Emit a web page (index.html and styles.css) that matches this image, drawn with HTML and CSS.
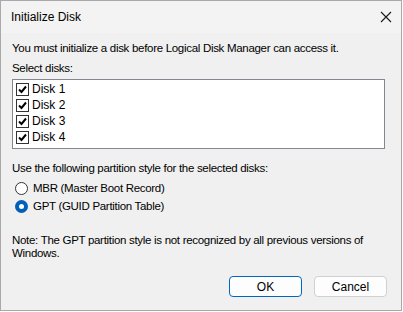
FILE: index.html
```html
<!DOCTYPE html>
<html>
<head>
<meta charset="utf-8">
<link rel="stylesheet" href="styles.css">
</head>
<body>
<div class="window">
  <div class="titlebar">
    <span class="title">Initialize Disk</span>
    <svg class="close" width="12" height="12" viewBox="0 0 12 12"><path d="M1 1 L11 11 M11 1 L1 11" stroke="#1a1a1a" stroke-width="1.1" fill="none"/></svg>
  </div>
  <div class="client">
    <p class="line intro">You must initialize a disk before Logical Disk Manager can access it.</p>
    <p class="line label">Select disks:</p>
    <div class="listbox">
      <div class="item"><span class="check"><svg width="9" height="9" viewBox="0 0 9 9"><path d="M1 4.5 L3.5 7 L8 1.5" stroke="#000" stroke-width="2" fill="none"/></svg></span><span>Disk 1</span></div>
      <div class="item"><span class="check"><svg width="9" height="9" viewBox="0 0 9 9"><path d="M1 4.5 L3.5 7 L8 1.5" stroke="#000" stroke-width="2" fill="none"/></svg></span><span>Disk 2</span></div>
      <div class="item"><span class="check"><svg width="9" height="9" viewBox="0 0 9 9"><path d="M1 4.5 L3.5 7 L8 1.5" stroke="#000" stroke-width="2" fill="none"/></svg></span><span>Disk 3</span></div>
      <div class="item"><span class="check"><svg width="9" height="9" viewBox="0 0 9 9"><path d="M1 4.5 L3.5 7 L8 1.5" stroke="#000" stroke-width="2" fill="none"/></svg></span><span>Disk 4</span></div>
    </div>
    <p class="line style-label">Use the following partition style for the selected disks:</p>
    <div class="radios">
      <div class="radio-row"><span class="radio"></span><span>MBR (Master Boot Record)</span></div>
      <div class="radio-row"><span class="radio on"></span><span>GPT (GUID Partition Table)</span></div>
    </div>
    <p class="note">Note: The GPT partition style is not recognized by all previous versions of Windows.</p>
    <div class="buttons">
      <button class="btn default">OK</button>
      <button class="btn">Cancel</button>
    </div>
  </div>
</div>
</body>
</html>
```

FILE: styles.css
```css
html, body { margin: 0; padding: 0; }
body {
  width: 403px; height: 312px; overflow: hidden;
  background: #ffffff;
  font-family: "Liberation Sans", Arial, sans-serif;
  font-size: 11.5px;
  letter-spacing: -0.3px;
  color: #000;
}
.window {
  width: 400px; height: 309px;
  border: 1px solid #a9a9a9;
  background: #f0f0f0;
  display: flex; flex-direction: column;
}
.titlebar {
  height: 32px;
  background: #f3f3f3;
  display: flex; align-items: center;
  padding: 0 9px 0 10px;
  justify-content: space-between;
}
.title { font-size: 12px; letter-spacing: 0; color: #000; }
.client { padding: 0 0 0 11px; display: flex; flex-direction: column; flex: 1; }
.line { margin: 0; line-height: 15px; }
.intro { margin-top: 8px; }
.label { margin-top: 5px; }
.listbox {
  margin-top: 3px;
  width: 373px; height: 70px;
  border: 1px solid #828790;
  background: #fff;
  padding-top: 1px;
  box-sizing: border-box;
}
.item { display: flex; align-items: center; height: 16px; padding-left: 3px; font-size: 12px; letter-spacing: 0; }
.check {
  width: 11px; height: 11px; border: 1px solid #333;
  background: #fff;
  display: flex; align-items: center; justify-content: center;
  margin-right: 3px;
}
.style-label { margin-top: 12px; }
.radios { display: flex; flex-direction: column; margin-top: 3px; margin-left: 3px; }
.radio-row { display: flex; align-items: center; height: 18px; }
.radio {
  width: 11px; height: 11px; border-radius: 50%;
  border: 1px solid #333; background: #fff; margin-right: 5px;
  box-sizing: content-box;
}
.radio.on { background: #fff; border: 4px solid #005fb8; width: 5px; height: 5px; }
.note { margin: 19px 0 0 0; line-height: 13px; width: 380px; }
.buttons { display: flex; gap: 12px; justify-content: flex-end; margin-top: 16px; padding-right: 14px; }
.btn {
  width: 73px; height: 21px;
  font-family: inherit; font-size: 12px; letter-spacing: 0;
  color: #000;
  background: #fdfdfd;
  border: 1px solid #d0d0d0; border-radius: 4px;
  padding: 0;
}
.btn.default { border-color: #0067c0; }
```
